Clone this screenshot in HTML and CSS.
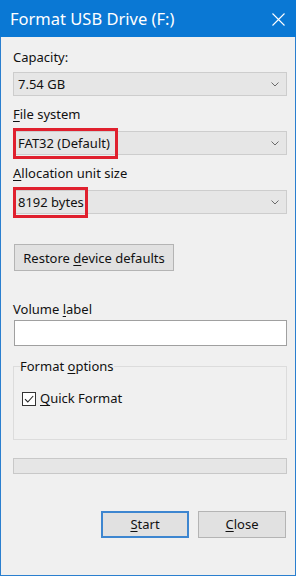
FILE: index.html
```html
<!DOCTYPE html>
<html>
<head>
<meta charset="utf-8">
<link rel="stylesheet" href="styles.css">
</head>
<body>
<div class="window">
  <div class="titlebar">
    <span class="title">Format USB Drive (F:)</span>
    <svg class="close" width="13" height="13" viewBox="0 0 13 13"><path d="M0.5 0.5 L12.5 12.5 M12.5 0.5 L0.5 12.5" stroke="#fff" stroke-width="1.1" fill="none"/></svg>
  </div>
  <div class="content">
    <div class="label first">Capacity:</div>
    <div class="combo"><span>7.54 GB</span><svg class="chev" width="8" height="5" viewBox="0 0 8 5"><path d="M0.5 0.5 L4 4 L7.5 0.5" stroke="#6a6a6a" stroke-width="1" fill="none"/></svg></div>

    <div class="label"><u>F</u>ile system</div>
    <div class="combo"><span>FAT32 (Default)</span><svg class="chev" width="8" height="5" viewBox="0 0 8 5"><path d="M0.5 0.5 L4 4 L7.5 0.5" stroke="#6a6a6a" stroke-width="1" fill="none"/></svg><div class="mark mark-fs"></div></div>

    <div class="label"><u>A</u>llocation unit size</div>
    <div class="combo"><span>8192 bytes</span><svg class="chev" width="8" height="5" viewBox="0 0 8 5"><path d="M0.5 0.5 L4 4 L7.5 0.5" stroke="#6a6a6a" stroke-width="1" fill="none"/></svg><div class="mark mark-au"></div></div>

    <button class="btn restore">Restore <u>d</u>evice defaults</button>

    <div class="label vol">Volume <u>l</u>abel</div>
    <div class="textbox"></div>

    <fieldset class="group">
      <legend>Format <u>o</u>ptions</legend>
      <div class="check-row"><span class="checkbox"><svg width="12" height="12" viewBox="0 0 12 12"><path d="M2 6.2 L4.8 9 L10.2 3" stroke="#222" stroke-width="1.1" fill="none"/></svg></span><span><u>Q</u>uick Format</span></div>
    </fieldset>

    <div class="progress"></div>

    <div class="actions">
      <button class="btn action default"><u>S</u>tart</button>
      <button class="btn action"><u>C</u>lose</button>
    </div>
  </div>
</div>
</body>
</html>
```

FILE: styles.css
```css
html, body {
  margin: 0;
  padding: 0;
  background: #ffffff;
}
body {
  width: 300px;
  height: 576px;
  overflow: hidden;
  font-family: "Noto Sans", "Open Sans", sans-serif;
  font-size: 13px;
  color: #111;
}
.window {
  width: 296px;
  height: 576px;
  box-sizing: border-box;
  border: 1px solid #2a7fcf;
  border-top: none;
  background: #f0f0f0;
}
.titlebar {
  height: 37px;
  background: #0a78d4;
  margin: 0 -1px;
  display: flex;
  align-items: center;
  justify-content: space-between;
  padding: 0 11px 0 10px;
}
.title {
  color: #fff;
  font-size: 16.5px;
  line-height: 20px;
  margin-top: 1px;
}
.close {
  display: block;
  margin-top: 1px;
}
.content {
  padding: 0 8px 0 12px;
}
.label {
  line-height: 17px;
  margin-top: 10px;
  margin-bottom: 8px;
}
.label.first {
  margin-top: 12px;
  margin-bottom: 6px;
}
u {
  text-decoration: underline;
  text-underline-offset: 2px;
}
.combo {
  position: relative;
  height: 24px;
  box-sizing: border-box;
  border: 1px solid #cdcdcd;
  background: #e6e6e6;
  display: flex;
  align-items: center;
  justify-content: space-between;
  padding: 0 7px 0 4px;
}
.combo span {
  line-height: 17px;
}
.chev {
  display: block;
}
.mark {
  position: absolute;
  top: -4px;
  left: -1px;
  height: 31px;
  box-sizing: border-box;
  border: 3px solid #e0202e;
}
.mark-fs {
  width: 105px;
}
.mark-au {
  width: 75px;
}
.btn {
  font-family: inherit;
  font-size: inherit;
  color: #111;
  background: #e1e1e1;
  border: 1px solid #b4b4b4;
  box-sizing: border-box;
  padding: 0;
  margin: 0;
  display: block;
  text-align: center;
  line-height: 23px;
}
.restore {
  margin-top: 30px;
  margin-left: 1px;
  width: 160px;
  height: 27px;
  line-height: 24px;
}
.label.vol {
  margin-top: 30px;
  margin-bottom: 2px;
}
.textbox {
  height: 26px;
  box-sizing: border-box;
  border: 1px solid #a0a0a0;
  background: #fff;
  margin-left: 1px;
}
.group {
  margin: 12px 0 0 0;
  padding: 0 0 0 8px;
  border: 1px solid #dcdcdc;
  height: 82px;
  box-sizing: border-box;
}
.group legend {
  padding: 0;
  margin-left: -2px;
  line-height: 17px;
}
.check-row {
  display: flex;
  align-items: center;
  gap: 4px;
  margin-top: 15px;
  line-height: 17px;
}
.checkbox {
  width: 14px;
  height: 14px;
  box-sizing: border-box;
  border: 1px solid #333;
  background: #fff;
  display: flex;
  align-items: center;
  justify-content: center;
}
.checkbox svg {
  display: block;
}
.progress {
  margin-top: 18px;
  height: 16px;
  box-sizing: border-box;
  border: 1px solid #c8c8c8;
  background: #e6e6e6;
}
.actions {
  display: flex;
  justify-content: flex-end;
  gap: 9px;
  margin-top: 37px;
  padding-right: 1px;
}
.action {
  width: 88px;
  height: 27px;
}
.action.default {
  border: 2px solid #3d86d0;
}
```
